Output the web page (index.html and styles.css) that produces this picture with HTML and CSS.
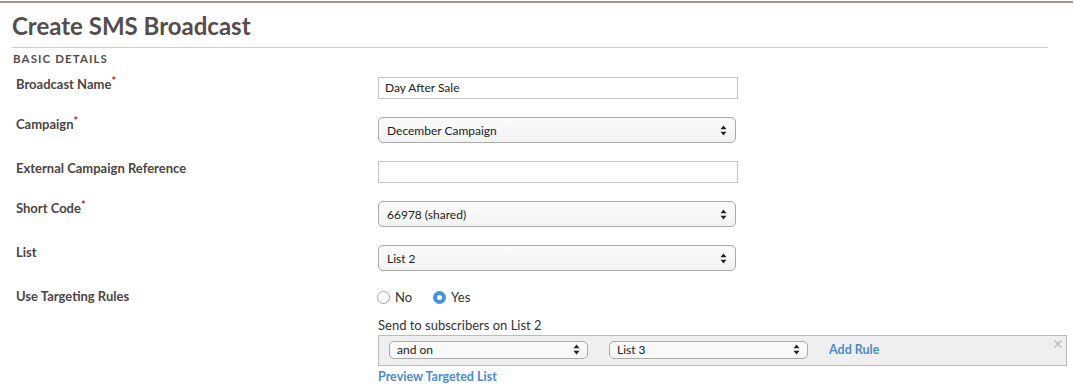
FILE: index.html
```html
<!DOCTYPE html>
<html lang="en">
<head>
    <meta charset="UTF-8">
    <title>Create SMS Broadcast</title>
    <link rel="stylesheet" href="styles.css">
</head>
<body>
    <div class="page">
        <h1>Create SMS Broadcast</h1>
        <div class="section-title">BASIC DETAILS</div>

        <!-- Basic details form -->
        <div class="form">
            <div class="row">
                <label>Broadcast Name<span class="req">*</span></label>
                <div class="input">Day After Sale</div>
            </div>
            <div class="row">
                <label>Campaign<span class="req">*</span></label>
                <div class="select">
                    <span>December Campaign</span>
                    <svg class="arrows" width="7" height="11" viewBox="0 0 7 11"><path d="M3.5 0.5L6.5 4.3H0.5Z M3.5 10.5L6.5 6.7H0.5Z" fill="#222"/></svg>
                </div>
            </div>
            <div class="row">
                <label>External Campaign Reference</label>
                <div class="input"></div>
            </div>
            <div class="row">
                <label>Short Code<span class="req">*</span></label>
                <div class="select">
                    <span>66978 (shared)</span>
                    <svg class="arrows" width="7" height="11" viewBox="0 0 7 11"><path d="M3.5 0.5L6.5 4.3H0.5Z M3.5 10.5L6.5 6.7H0.5Z" fill="#222"/></svg>
                </div>
            </div>
            <div class="row">
                <label>List</label>
                <div class="select">
                    <span>List 2</span>
                    <svg class="arrows" width="7" height="11" viewBox="0 0 7 11"><path d="M3.5 0.5L6.5 4.3H0.5Z M3.5 10.5L6.5 6.7H0.5Z" fill="#222"/></svg>
                </div>
            </div>
            <div class="row row-radio">
                <label>Use Targeting Rules</label>
                <div class="field">
                    <div class="radios">
                        <span class="radio"><span class="dot"></span>No</span>
                        <span class="radio checked"><span class="dot"></span>Yes</span>
                    </div>
                    <p class="send-to">Send to subscribers on List 2</p>
                    <div class="rule-box">
                        <div class="select small">
                            <span>and on</span>
                            <svg class="arrows" width="7" height="11" viewBox="0 0 7 11"><path d="M3.5 0.5L6.5 4.3H0.5Z M3.5 10.5L6.5 6.7H0.5Z" fill="#222"/></svg>
                        </div>
                        <div class="select small">
                            <span>List 3</span>
                            <svg class="arrows" width="7" height="11" viewBox="0 0 7 11"><path d="M3.5 0.5L6.5 4.3H0.5Z M3.5 10.5L6.5 6.7H0.5Z" fill="#222"/></svg>
                        </div>
                        <a class="link" href="#">Add Rule</a>
                        <svg class="close" width="8" height="8" viewBox="0 0 8 8"><path d="M0.5 0.5L7.5 7.5M7.5 0.5L0.5 7.5" stroke="#b9b9b9" stroke-width="1.3"/></svg>
                    </div>
                    <a class="link preview" href="#">Preview Targeted List</a>
                </div>
            </div>
        </div>
    </div>
</body>
</html>
```

FILE: styles.css
```css
body {
    margin: 0;
    padding-top: 1px;
    font-family: Lato, 'Open Sans', sans-serif;
    color: #333;
    background: #fff;
}
.page {
    border-top: 2px solid #a89292;
    width: 1073px;
    padding: 0 0 0 12px;
    box-sizing: border-box;
}
h1 {
    margin: 0;
    padding-top: 8px;
    height: 36px;
    font-size: 24px;
    line-height: 30px;
    font-weight: 700;
    color: #574c4c;
    border-bottom: 1px solid #cbcbcb;
    width: 1036px;
    box-sizing: content-box;
}
.section-title {
    margin: 4px 0 0 1px;
    font-size: 11.5px;
    line-height: 14px;
    font-weight: 700;
    letter-spacing: 1.1px;
    color: #574c4c;
}
.form {
    margin-top: 11px;
    padding-left: 4px;
}
.row {
    display: grid;
    grid-template-columns: 362px 360px;
    align-items: start;
    margin-bottom: 18px;
}
.row label {
    font-size: 13px;
    line-height: 16px;
    font-weight: 700;
    color: #4e4444;
    margin-top: -1px;
}
.req {
    color: #b0282d;
    font-size: 11px;
    vertical-align: top;
    line-height: 10px;
}
.input {
    height: 22px;
    border: 1px solid #c4c4c4;
    box-sizing: border-box;
    padding: 0 6px;
    font-size: 12px;
    line-height: 20px;
    color: #222;
    background: #fff;
}
.select {
    width: 358px;
    height: 26px;
    border: 1px solid #a9a9a9;
    border-radius: 5px;
    box-sizing: border-box;
    padding: 0 8px 0 8px;
    display: flex;
    align-items: center;
    justify-content: space-between;
    font-size: 12px;
    color: #222;
    background: linear-gradient(#fbfbfb, #f3f3f3);
}
.row-radio {
    margin-top: 1px;
}
.radios {
    display: flex;
    gap: 21px;
    font-size: 13px;
    line-height: 16px;
    color: #333;
    margin-left: -1px;
}
.radio {
    display: flex;
    align-items: center;
    gap: 5px;
}
.radio .dot {
    width: 13px;
    height: 13px;
    border: 1px solid #a7a7a7;
    border-radius: 50%;
    box-sizing: border-box;
    background: #fff;
}
.radio.checked .dot {
    border: 4.5px solid #4a90e2;
    background: #fff;
}
.send-to {
    margin: 12px 0 0;
    font-size: 13px;
    line-height: 16px;
    color: #333;
}
.rule-box {
    position: relative;
    width: 689px;
    height: 31px;
    margin-top: 2px;
    box-sizing: border-box;
    border: 1px solid #bbb;
    background: #efefef;
    display: flex;
    align-items: center;
    gap: 21px;
    padding-left: 10px;
    padding-bottom: 2px;
}
.select.small {
    width: 199px;
    height: 18px;
    border-color: #aaa;
    padding: 0 7px;
    background: #f9f9f9;
}
.link {
    font-size: 12.5px;
    font-weight: 700;
    color: #4b8bcf;
    text-decoration: none;
}
.close {
    position: absolute;
    right: 4px;
    top: 4px;
}
.preview {
    display: block;
    margin-top: 3px;
    line-height: 16px;
}
```
